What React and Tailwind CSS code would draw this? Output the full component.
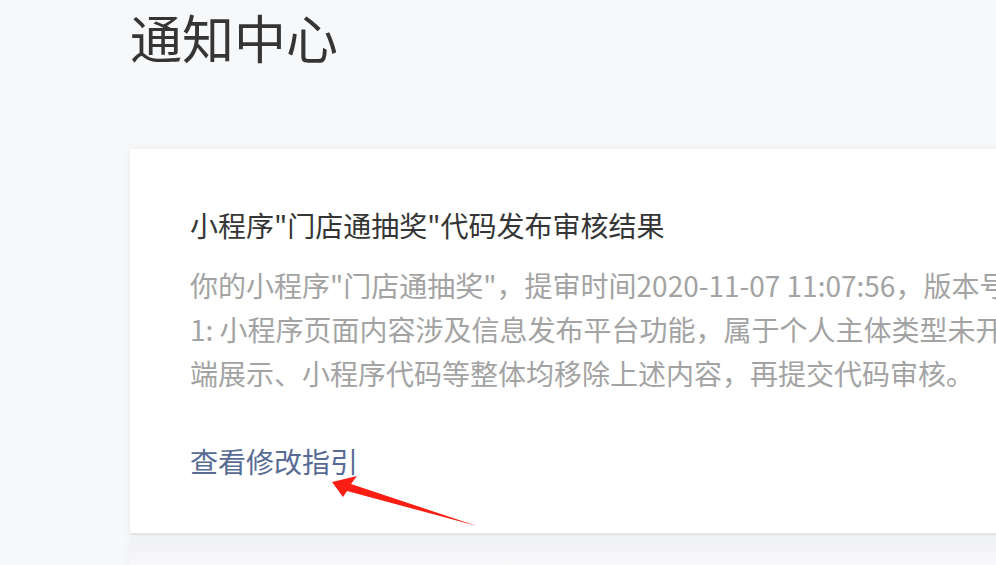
const lines = [
    '你的小程序"门店通抽奖"，提审时间2020-11-07 11:07:56，版本号1.0.0审核未通过，原因如下：',
    '1: 小程序页面内容涉及信息发布平台功能，属于个人主体类型未开放的服务类目，请在小程序前',
    '端展示、小程序代码等整体均移除上述内容，再提交代码审核。',
];

const App = () => {
    return (
        <div className="w-[996px] h-[565px] overflow-hidden bg-[#f7f8fa] font-['Noto_Sans_CJK_SC','Noto_Sans',sans-serif] relative">
            <div className="pl-[130px] pt-[2px]">
                <h1 className="text-[52px] leading-[70px] text-[#353535] font-normal">通知中心</h1>
                <div className="mt-[77px] w-[1000px] bg-white shadow-[0_0_10px_rgba(0,0,0,0.06)] border-b-2 border-[#e6e7eb] pl-[60px] pt-[56px] pb-[52px]">
                    <div className="text-[28px] leading-[40px] text-[#353535] whitespace-nowrap">小程序"门店通抽奖"代码发布审核结果</div>
                    <div className="mt-[18px] text-[28px] leading-[44px] text-[#a3a3a3] whitespace-nowrap">
                        {lines.map((line) => (
                            <div key={line}>{line}</div>
                        ))}
                    </div>
                    <div className="mt-[46px] text-[28px] leading-[40px] text-[#576b95] whitespace-nowrap">查看修改指引</div>
                </div>
                <div className="mt-[1px] w-[1000px] h-[40px] bg-gradient-to-b from-[#f0f1f4] to-[#fbfbfc] shadow-[0_0_8px_rgba(0,0,0,0.04)]"></div>
            </div>
            {/* annotation arrow */}
            <svg className="absolute left-0 top-0 pointer-events-none" width="996" height="565" viewBox="0 0 996 565">
                <polygon points="332,482 357,476 351,484 477,526 347,491 343,497" fill="#fa1e14" />
            </svg>
        </div>
    );
};

export default App;
